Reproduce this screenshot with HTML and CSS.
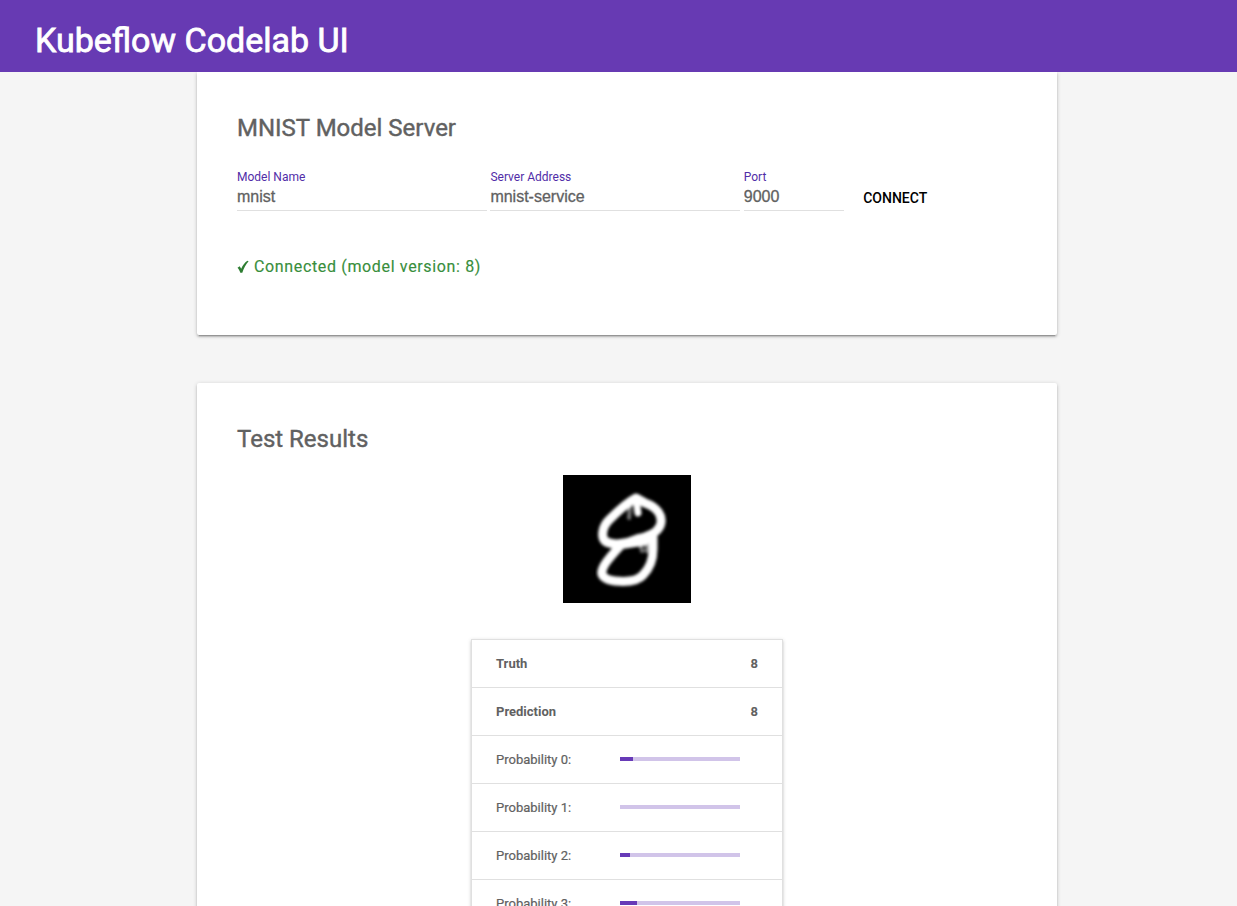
FILE: index.html
```html
<!DOCTYPE html>
<html lang="en">
<head>
<meta charset="utf-8">
<title>Kubeflow Codelab UI</title>
<link rel="stylesheet" href="styles.css">
</head>
<body>
<header class="header"><h1 class="title">Kubeflow Codelab UI</h1></header>
<main class="main">
  <section class="card server">
    <h2 class="heading">MNIST Model Server</h2>
    <form class="form">
      <label class="field"><span class="label">Model Name</span><input class="input" value="mnist"></label>
      <label class="field"><span class="label">Server Address</span><input class="input" value="mnist-service"></label>
      <label class="field port"><span class="label">Port</span><input class="input" value="9000"></label>
      <button class="connect" type="button">CONNECT</button>
    </form>
    <p class="status"><svg class="check" viewBox="0 0 12 14"><path d="M.5 7.800 2.700 6.300 4.200 8.800C5.700 5.500 7.600 2.600 10.400.800L11.600 1.200C8.800 4.400 6.800 8.300 5.300 12.800H3.300C2.600 10.700 1.800 9 .5 7.800Z"/></svg><span class="status-text">Connected (model version: 8)</span></p>
  </section>
  <section class="card results">
    <h2 class="heading">Test Results</h2>
    <svg class="digit" viewBox="0 0 128 128">
      <defs><filter id="soft"><feGaussianBlur stdDeviation="1.4"/></filter></defs>
      <rect width="128" height="128"/>
      <g class="ink" filter="url(#soft)">
        <path class="trace" d="M67 31 66 43M77 68 79 76M85 68 83 76"/>
        <path d="M73 23C65 27 53 38 46 45C39 52 38 62 42 66C49 71 63 69 74 64C84 62 94 58 97 51C101 41 94 32 82 28Z"/>
        <path d="M57 71C51 78 42 87 40 93C36 101 43 105 52 106C62 107 74 107 80 100C87 93 90 84 90 74L90 62M54 71 74 65 87 63"/>
        <path class="spur" d="M73 25 75 38M62 70 82 67"/>
      </g>
    </svg>
    <div class="table">
      <div class="row strong"><span>Truth</span><span>8</span></div>
      <div class="row strong"><span>Prediction</span><span>8</span></div>
      <div class="row"><span>Probability 0:</span><div class="track"><div class="bar" style="width:13px"></div></div></div>
      <div class="row"><span>Probability 1:</span><div class="track"></div></div>
      <div class="row"><span>Probability 2:</span><div class="track"><div class="bar" style="width:10px"></div></div></div>
      <div class="row"><span>Probability 3:</span><div class="track"><div class="bar" style="width:17px"></div></div></div>
    </div>
  </section>
</main>
</body>
</html>
```
FILE: styles.css
```css
* { box-sizing: border-box; }
body { margin: 0; height: 906px; overflow: hidden; display: flex; flex-direction: column; background: #f5f5f5; color: #616161; font-family: Roboto, sans-serif; }
.header { flex: none; height: 72px; padding: 20px 35px; background: #673ab3; color: #fff; }
.title { margin: 0; font-size: 34px; line-height: 40px; font-weight: 400; -webkit-text-stroke: .8px #fff; white-space: nowrap; }
.main { flex: 1; min-height: 0; overflow: hidden; padding-left: 177px; }
.card { width: 860px; margin-left: 20px; padding: 40px; background: #fff; border-radius: 2px; box-shadow: 0 2px 2px rgba(0,0,0,.14), 0 3px 1px -2px rgba(0,0,0,.2), 0 1px 4px rgba(0,0,0,.2); }
.server { height: 263px; border-radius: 0 0 2px 2px; }
.results { height: 700px; margin-top: 48px; }
.heading { margin: 0; font-size: 24px; line-height: 32px; font-weight: 400; -webkit-text-stroke: .4px; }
.form { display: flex; gap: 3.4px; margin-top: 24px; height: 43px; }
.field { display: flex; flex-direction: column; width: 250px; height: 43px; border-bottom: 1px solid #e0e0e0; }
.port { width: 100px; }
.label { height: 18px; font-size: 12px; line-height: 18px; color: #512da8; }
.input { width: 100%; height: 22px; padding: 0; border: 0; outline: 0; background: none; color: #616161; font: 16px "Liberation Sans", Arial, sans-serif; -webkit-text-stroke: .3px; }
.connect { height: 36px; margin: 12px 0 0 0; padding: 0 16px; border: 0; background: none; font: 500 14px/36px Roboto, sans-serif; color: #000; }
.status { display: flex; align-items: center; margin: 44px 0 0; line-height: 24px; font-size: 16px; letter-spacing: .65px; color: #388e3c; }
.check { width: 12px; height: 14px; fill: #2e7d32; margin: 0 5px 1px 0; }
.status-text { -webkit-text-stroke: .15px; white-space: nowrap; }
.digit { display: block; width: 128px; height: 128px; margin: 20px auto 36px; }
.ink { fill: none; stroke: #fff; stroke-width: 9; stroke-linecap: round; stroke-linejoin: round; }
.spur { stroke-width: 7; }
.trace { stroke: #777; stroke-width: 4; }
.table { width: 312px; margin: 0 auto; border: 1px solid #e0e0e0; box-shadow: 0 2px 2px rgba(0,0,0,.1), 0 1px 4px rgba(0,0,0,.16); }
.row { display: flex; align-items: center; justify-content: space-between; height: 48px; padding: 0 24px; border-bottom: 1px solid #e0e0e0; font-size: 13px; -webkit-text-stroke: .2px; }
.strong { font-weight: 700; -webkit-text-stroke: 0; }
.track { width: 120px; height: 4px; margin: 0 18px 2px 0; background: #d1c4e9; }
.bar { height: 4px; background: #673ab7; }
```
